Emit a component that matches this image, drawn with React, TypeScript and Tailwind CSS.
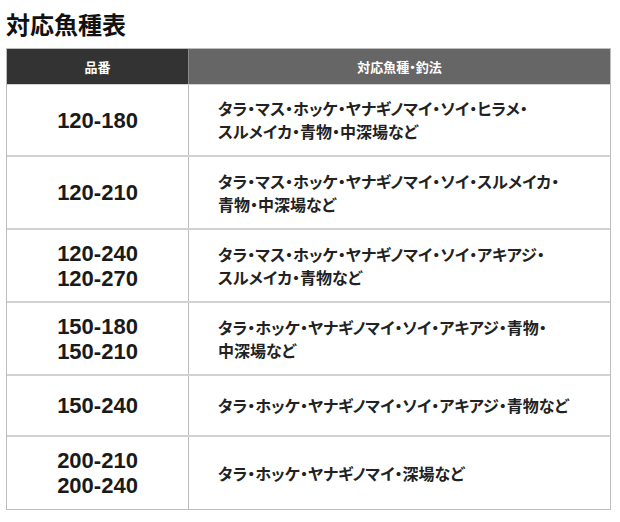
import React from "react";

const rows: { codes: string[]; lines: string[]; h: string }[] = [
  { codes: ["120-180"], lines: ["タラ・マス・ホッケ・ヤナギノマイ・ソイ・ヒラメ・", "スルメイカ・青物・中深場など"], h: "h-[73px]" },
  { codes: ["120-210"], lines: ["タラ・マス・ホッケ・ヤナギノマイ・ソイ・スルメイカ・", "青物・中深場など"], h: "h-[73px]" },
  { codes: ["120-240", "120-270"], lines: ["タラ・マス・ホッケ・ヤナギノマイ・ソイ・アキアジ・", "スルメイカ・青物など"], h: "h-[73px]" },
  { codes: ["150-180", "150-210"], lines: ["タラ・ホッケ・ヤナギノマイ・ソイ・アキアジ・青物・", "中深場など"], h: "h-[73px]" },
  { codes: ["150-240"], lines: ["タラ・ホッケ・ヤナギノマイ・ソイ・アキアジ・青物など"], h: "h-[61px]" },
  { codes: ["200-210", "200-240"], lines: ["タラ・ホッケ・ヤナギノマイ・深場など"], h: "h-[72px]" },
];

export default function App() {
  return (
    <div className="w-[620px] h-[522px] bg-white px-[6px] [font-family:'Noto_Sans_CJK_JP',sans-serif]">
      <div className="h-[48px] flex items-center text-[24px] font-bold text-[#111] leading-none pb-[1px]">
        対応魚種表
      </div>
      <div className="w-[605px] border border-[#bdbdbd]">
        <div className="grid grid-cols-[181px_1fr] h-[35px]">
          <div className="bg-[#333333] text-white text-[13px] font-bold flex items-center justify-center">品番</div>
          <div className="bg-[#666666] text-white text-[13px] font-bold flex items-center justify-center border-l border-[#8a8a8a] [font-feature-settings:'palt']">
            対応魚種・釣法
          </div>
        </div>
        {rows.map((r, i) => (
          <div
            key={i}
            className={`grid grid-cols-[181px_1fr] ${r.h} ${i < rows.length - 1 ? "border-b-2 border-[#d2d2d2]" : ""} ${i === 0 ? "border-t border-[#c8c8c8]" : ""}`}
          >
            <div className="flex flex-col items-center justify-center text-[22px] leading-[25px] font-bold text-[#1a1a1a] [font-family:'Liberation_Sans',Arial,sans-serif]">
              {r.codes.map((c) => (
                <div key={c}>{c}</div>
              ))}
            </div>
            <div className="border-l border-[#bcbcbc] flex flex-col justify-center pl-[29px] text-[16px] leading-[23px] font-bold text-[#222] [font-feature-settings:'palt']">
              {r.lines.map((l) => (
                <div key={l}>{l}</div>
              ))}
            </div>
          </div>
        ))}
      </div>
    </div>
  );
}
